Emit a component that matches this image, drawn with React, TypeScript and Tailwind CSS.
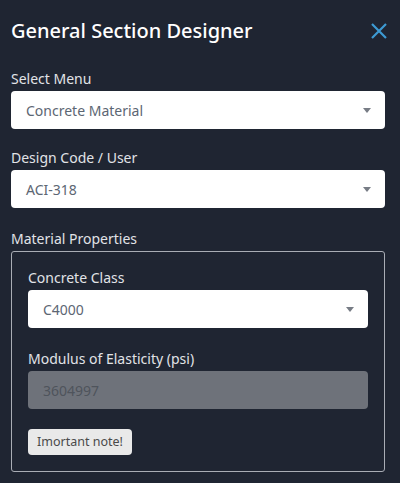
function Caret() {
  return (
    <svg width="8" height="5" viewBox="0 0 8 5" className="shrink-0">
      <path d="M0 0H8L4 5Z" fill="#777c85" />
    </svg>
  )
}

function SelectBox({ value }: { value: string }) {
  return (
    <div className="flex h-[38px] items-center justify-between rounded-[4px] bg-white pl-[15px] pr-[14px]">
      <span className="text-[14px] text-[#5c6673]">{value}</span>
      <Caret />
    </div>
  )
}

function Label({ children }: { children: string }) {
  return <div className="mb-[2px] text-[14px] leading-[20px] text-[#e1e3e7]">{children}</div>
}

export default function App() {
  return (
    <div className="min-h-[483px] w-[400px] bg-[#1f2532] pb-[12px] pl-[11px] pr-[15px] pt-[16px]" style={{ fontFamily: '"Noto Sans", "Open Sans", sans-serif' }}>
      <div className="flex items-center justify-between">
        <h1 className="text-[20px] font-medium leading-[30px] text-white">General Section Designer</h1>
        <svg width="16" height="16" viewBox="0 0 16 16" className="-mr-[2px]">
          <path d="M1 1L15 15M15 1L1 15" stroke="#3d9ad3" strokeWidth="2.2" />
        </svg>
      </div>

      <div className="mt-[23px]">
        <Label>Select Menu</Label>
        <SelectBox value="Concrete Material" />
      </div>

      <div className="mt-[19px]">
        <Label>Design Code / User</Label>
        <SelectBox value="ACI-318" />
      </div>

      <div className="mt-[21px]">
        <Label>Material Properties</Label>
        <div className="rounded-[3px] border border-[#a9adb5] px-[16px] pb-[16px] pt-[16px]">
          <Label>Concrete Class</Label>
          <SelectBox value="C4000" />

          <div className="mt-[21px]">
            <Label>Modulus of Elasticity (psi)</Label>
            <div className="flex h-[38px] items-center rounded-[4px] bg-[#6e727a] pl-[15px]">
              <span className="text-[14px] text-[#4f545c]">3604997</span>
            </div>
          </div>

          <button className="mt-[20px] flex h-[26px] items-center rounded-[4px] bg-[#e9e9e9] px-[9px] text-[12.5px] text-[#4a4a4a]">
            Imortant note!
          </button>
        </div>
      </div>
    </div>
  )
}
